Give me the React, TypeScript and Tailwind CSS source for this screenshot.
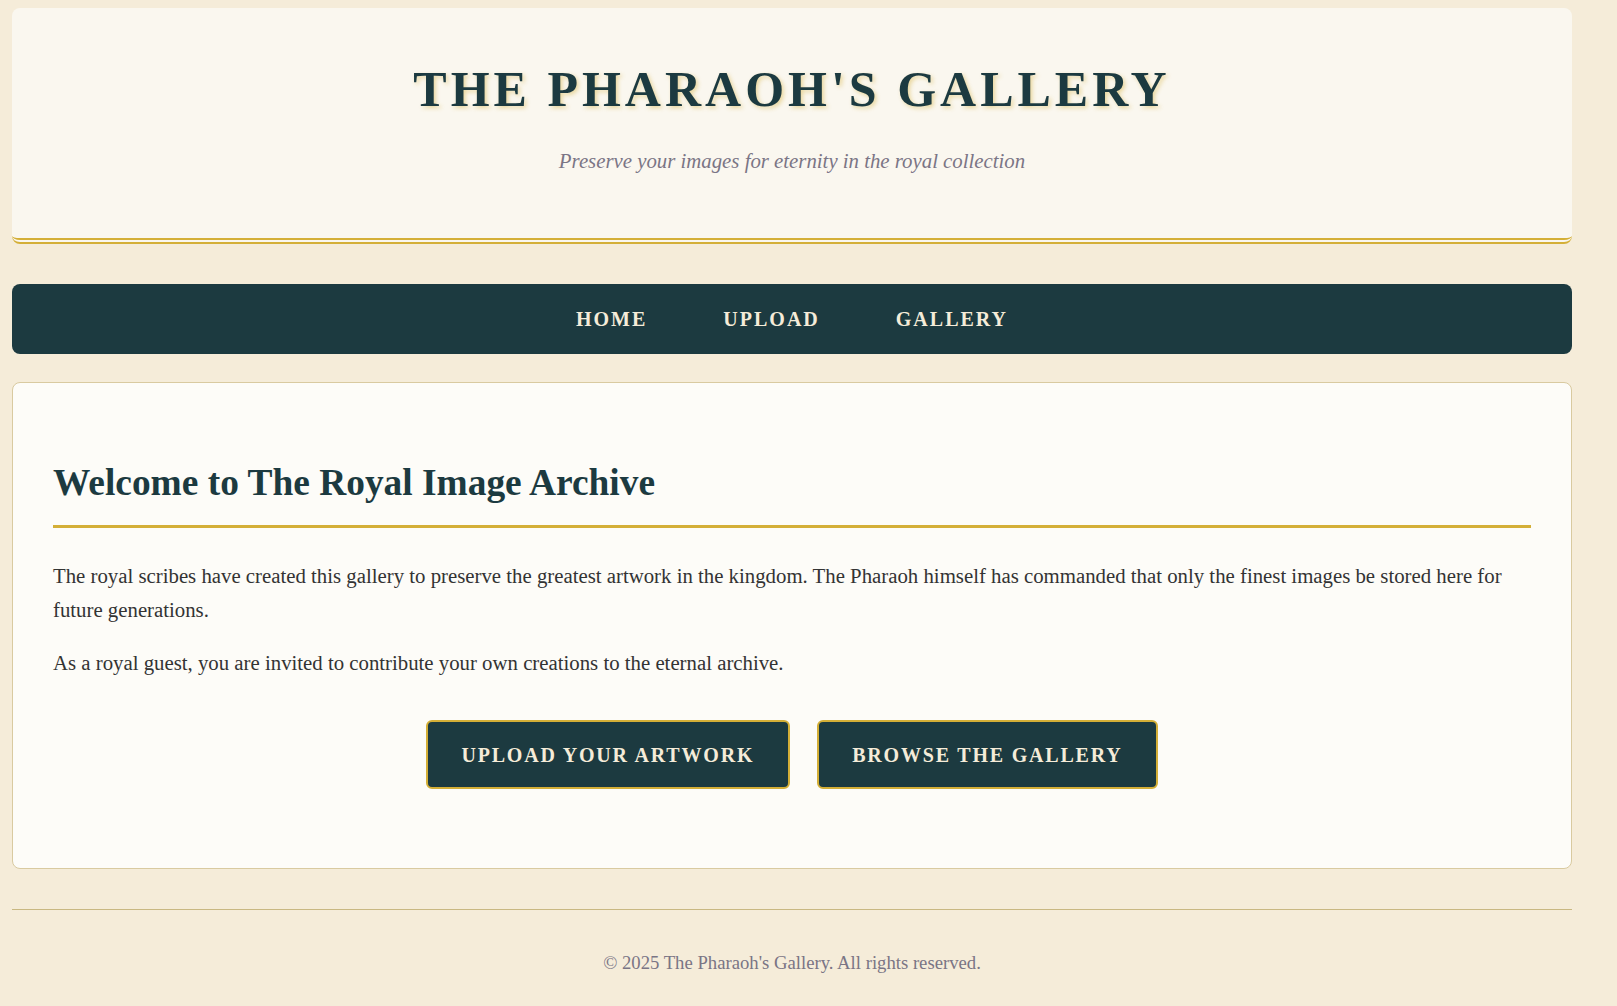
export default function App() {
  const links = ["HOME", "UPLOAD", "GALLERY"];

  return (
    <div className="min-h-screen bg-[#f5ecd9] pt-[8px] pl-[12px] font-['Liberation_Serif',serif]">
      <div className="w-[1560px]">
        <header className="rounded-lg bg-[#faf7ef] border-b-[6px] border-double border-[#d4af37] pt-[51px] pb-[62px] text-center">
          <h1 className="text-[50px] leading-[60px] font-bold tracking-[4px] text-[#1c3a40] [text-shadow:2px_2px_4px_rgba(212,175,55,0.45)]">
            THE PHARAOH'S GALLERY
          </h1>
          <p className="mt-[26px] text-[20.8px] leading-[31px] italic text-[#7a7585]">
            Preserve your images for eternity in the royal collection
          </p>
        </header>

        <nav className="mt-[40px] h-[70px] rounded-lg bg-[#1c3a40] flex items-center justify-center gap-[76px]">
          {links.map((l) => (
            <a key={l} href="#" className="text-[20px] font-bold tracking-[2px] text-[#f5ecd9]">
              {l}
            </a>
          ))}
        </nav>

        <main className="mt-[28px] rounded-lg border border-[#d9caa0] bg-[#fdfcf8] px-[40px] pt-[77px] pb-[79px]">
          <h2 className="text-[37.4px] leading-[45px] font-bold text-[#1c3a40] border-b-[3px] border-[#d4af37] pb-[20px]">
            Welcome to The Royal Image Archive
          </h2>
          <p className="mt-[31px] text-[20.8px] leading-[34px] text-[#333333]">
            The royal scribes have created this gallery to preserve the greatest artwork in the kingdom. The Pharaoh himself has commanded that only the finest images be stored here for future generations.
          </p>
          <p className="mt-[19px] text-[20.8px] leading-[34px] text-[#333333]">
            As a royal guest, you are invited to contribute your own creations to the eternal archive.
          </p>
          <div className="mt-[40px] flex justify-center gap-[27px]">
            <a href="#" className="h-[69px] px-[33.5px] flex items-center rounded-md border-2 border-[#d4af37] bg-[#1c3a40] text-[20px] font-bold tracking-[1.8px] text-[#f5ecd9]">
              UPLOAD YOUR ARTWORK
            </a>
            <a href="#" className="h-[69px] px-[33.5px] flex items-center rounded-md border-2 border-[#d4af37] bg-[#1c3a40] text-[20px] font-bold tracking-[1.8px] text-[#f5ecd9]">
              BROWSE THE GALLERY
            </a>
          </div>
        </main>

        <footer className="mt-[40px] border-t border-[#c9b882] pt-[39px] pb-[24px] text-center">
          <p className="text-[18.7px] leading-[28px] text-[#7a7585]">
            © 2025 The Pharaoh's Gallery. All rights reserved.
          </p>
        </footer>
      </div>
    </div>
  );
}
